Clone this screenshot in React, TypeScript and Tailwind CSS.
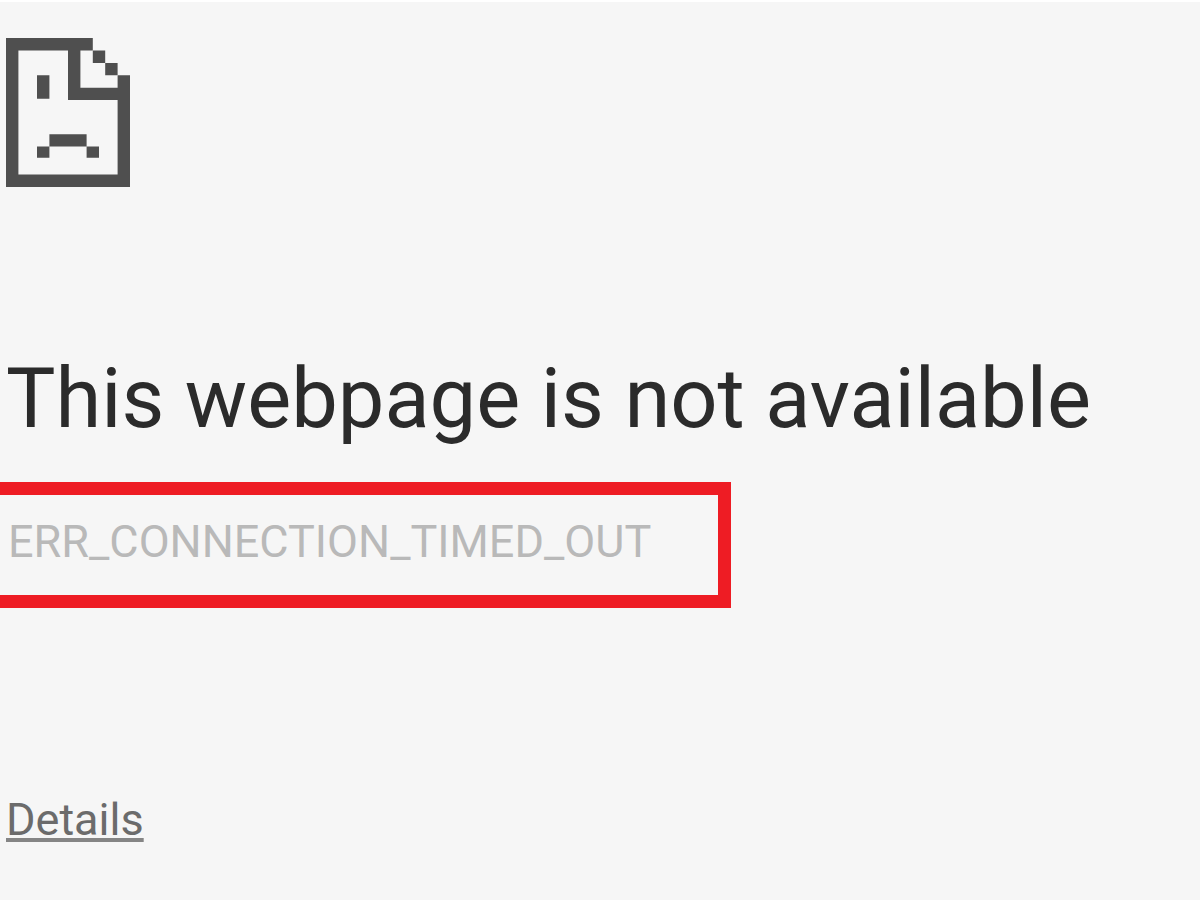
function SadPage() {
  return (
    <svg
      viewBox="0 0 20 24"
      className="block h-[149px] w-[124px] text-[#4f4f4f]"
      fill="currentColor"
      aria-hidden="true"
    >
      {/* sheet and folded corner */}
      <path d="M0 0h14v2h-2v6h6V6h2v18H0zM2 2v20h16V10h-8V2z" fillRule="evenodd" />
      <path d="M14 2h2v2h-2zM16 4h2v2h-2z" />
      {/* face */}
      <path d="M5 6h2v3.800H5zM7 15.500h6v2H7zM5 17.500h2v1.800H5zM13 17.500h2v1.800h-2z" />
    </svg>
  );
}

export default function App() {
  return (
    <main className="min-h-screen border-t-2 border-white bg-[#f6f6f6] pt-9 pb-12 font-['Roboto',sans-serif]">
      <div className="px-[6px]">
        <SadPage />
        <h1 className="mt-40 text-[83px] leading-[104px] text-[#2b2b2b]">
          This webpage is not available
        </h1>
      </div>

      <div className="mt-[31px] w-fit border-[13px] border-l-0 border-[#ee1c24] pt-4 pr-[67px] pb-[22px] pl-2">
        <p className="text-[45px] leading-[62px] text-[#b9b9b9]">ERR_CONNECTION_TIMED_OUT</p>
      </div>

      <a
        href="#details"
        className="mt-[182px] ml-[6px] inline-block text-[45px] leading-[60px] text-[#6b6b6b] underline decoration-[#858585] decoration-4 underline-offset-3"
      >
        Details
      </a>
    </main>
  );
}
